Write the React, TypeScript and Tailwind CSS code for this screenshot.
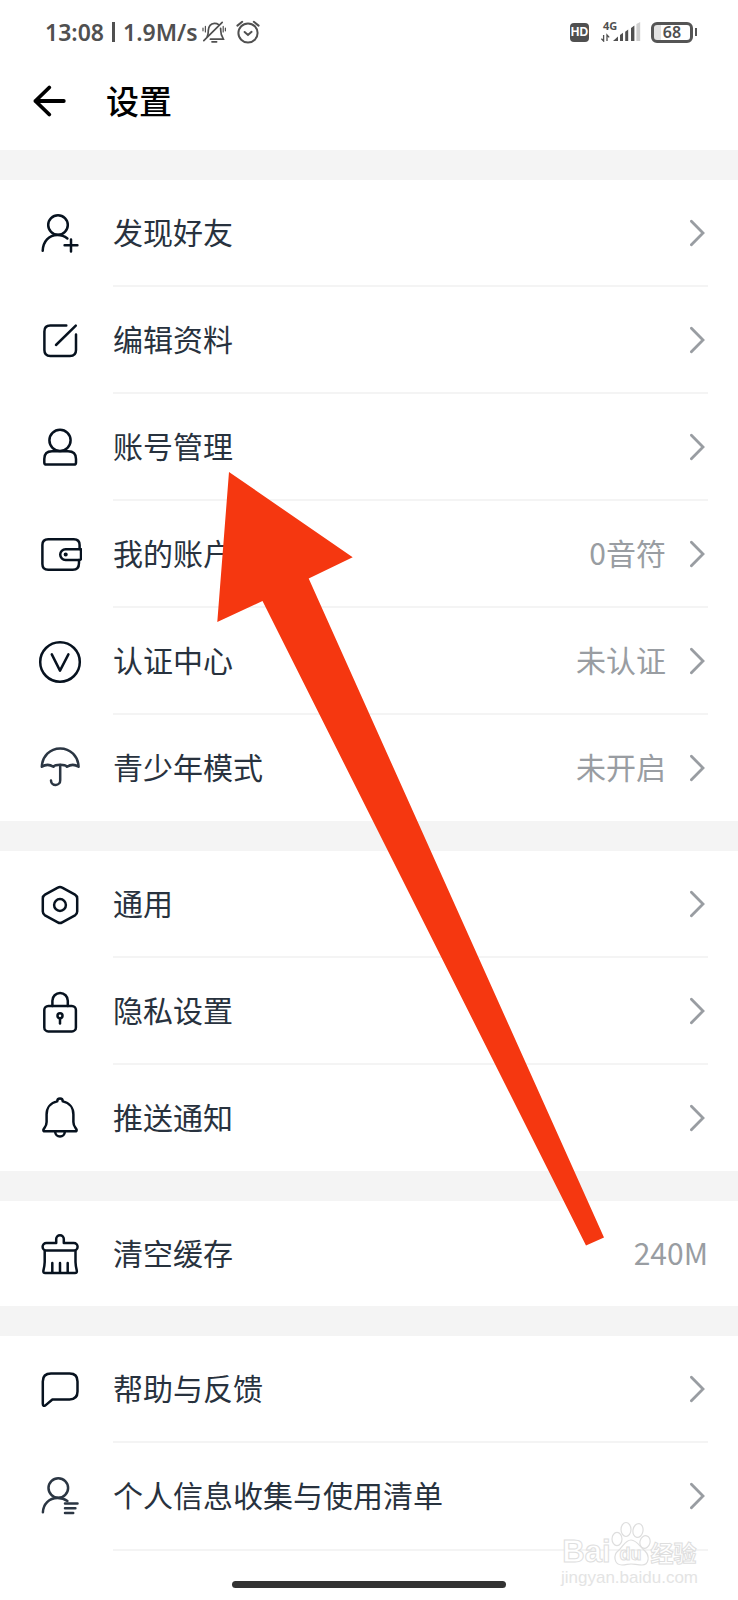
import type { ReactNode } from "react";

type Item = {
  label: string;
  icon: ReactNode;
  value?: string;
  soft?: boolean;
  chevron?: boolean;
};

const sections: Item[][] = [
  [
    {
      label: "发现好友",
      icon: (
        <>
          <circle cx="20" cy="13" r="9.8" />
          <path d="M4.7 38.8C5 29.5 11 23 19.4 23C23.4 23 26.6 24.2 29.4 26.4" />
          <path d="M26.6 33.3H39.4M33 27.4V39.6" />
        </>
      ),
    },
    {
      label: "编辑资料",
      icon: (
        <>
          <path d="M28.3 6.5H12.3Q6.4 6.5 6.4 12.4V31Q6.4 37 12.3 37H32Q38 37 38 31V15.6" />
          <path d="M18 26L37.8 6.7" />
        </>
      ),
    },
    {
      label: "账号管理",
      icon: (
        <>
          <circle cx="22" cy="14.3" r="10.6" />
          <path d="M14 25.3H30Q38 25.3 38 33V36.4Q38 38.5 36 38.5H8.4Q6.3 38.5 6.3 36.4V33Q6.3 25.3 14 25.3Z" />
        </>
      ),
    },
    {
      label: "我的账户",
      value: "0音符",
      icon: (
        <>
          <path d="M41.6 16V12Q41.6 6.2 35.8 6.2H10.2Q4.4 6.2 4.4 12V31Q4.4 36.8 10.2 36.8H34.8Q41 36.8 41 30V27" />
          <path d="M41 16.2H27.6A5.4 5.4 0 0 0 27.6 27H41.4Q43 27 43 25.4V16.2H41" />
          <circle cx="27.7" cy="21.5" r="0.8" fill="currentColor" />
        </>
      ),
    },
    {
      label: "认证中心",
      value: "未认证",
      icon: (
        <>
          <circle cx="22" cy="22" r="19.8" />
          <path d="M13.8 14.4L22 30.6L30.4 14.4" />
        </>
      ),
    },
    {
      label: "青少年模式",
      value: "未开启",
      soft: true,
      icon: (
        <>
          <path d="M3.8 20.8C4.2 10.5 12 2.4 22.2 2.4S40.2 10.5 40.6 20.8C37 18.4 32.6 18.4 29 20.8C26.6 18.2 17.8 18.2 15.4 20.8C11.8 18.4 7.4 18.4 3.8 20.8Z" />
          <path d="M22.2 19V34.2A4.6 4.6 0 0 1 13 34.6" />
        </>
      ),
    },
  ],
  [
    {
      label: "通用",
      icon: (
        <>
          <path d="M19.8 4.7Q22 3.4 24.2 4.7L37 11.6Q39.2 12.9 39.2 15.4V28.6Q39.2 31.1 37 32.4L24.2 39.3Q22 40.6 19.8 39.3L7 32.4Q4.8 31.1 4.8 28.6V15.4Q4.8 12.9 7 11.6Z" />
          <circle cx="22" cy="22" r="5.9" />
        </>
      ),
    },
    {
      label: "隐私设置",
      icon: (
        <>
          <rect x="6.3" y="16" width="31.6" height="25.4" rx="4" />
          <path d="M14.4 16V10.7A7.7 7.7 0 0 1 29.8 10.7V16" />
          <circle cx="22" cy="25.7" r="2.5" />
          <path d="M22 28.2V33.4" />
        </>
      ),
    },
    {
      label: "推送通知",
      icon: (
        <>
          <path d="M19.2 5.4C19.2 1.4 24.8 1.4 24.8 5.4C31.4 6.8 35.4 12 35.4 18.6V26C35.4 30.5 37.8 31.6 38.6 33.8Q38.8 35.3 37.4 35.3H6.6Q5.2 35.3 5.4 33.8C6.2 31.6 8.6 30.5 8.6 26V18.6C8.6 12 12.6 6.8 19.2 5.4Z" />
          <path d="M17.2 35.8A4.8 4.8 0 0 0 26.8 35.8" />
        </>
      ),
    },
  ],
  [
    {
      label: "清空缓存",
      value: "240M",
      chevron: false,
      icon: (
        <>
          <path d="M18.2 10.9V7A3.8 3.8 0 0 1 25.8 7V10.9H35.8A3.8 3.8 0 0 1 35.8 18.5H8.4A3.8 3.8 0 0 1 8.4 10.9Z" />
          <path d="M6.7 18.5V30Q6.6 34 5.4 38.6Q5 41 7.2 41H37Q39.2 41 38.8 38.6Q37.6 34 37.5 30V18.5" />
          <path d="M14.3 31V40M22 31V40M29.7 31V40" />
        </>
      ),
    },
  ],
  [
    {
      label: "帮助与反馈",
      icon: (
        <path d="M13 5.6H31.6Q39.5 5.6 39.5 13.4V23.6Q39.5 31.5 31.6 31.5H14.4L7.4 37.4Q4.8 38.8 4.8 35.8V13.4Q4.8 5.6 13 5.6Z" />
      ),
    },
    {
      label: "个人信息收集与使用清单",
      soft: true,
      icon: (
        <>
          <circle cx="20.3" cy="14" r="9.8" />
          <path d="M4.9 38.3C5.2 30 11 24 19.6 24C23.4 24 26.6 25 29.4 27" />
          <path d="M27 29.6H39.5M27 34.3H37.4M27 39H35.2" />
        </>
      ),
    },
  ],
];

function StatusBar() {
  return (
    <div className="flex h-16 items-center justify-between pr-[41px] pl-[45px] text-[#505050]">
      <div className="flex items-center">
        <span className="flex items-center gap-2 font-['Noto_Sans','Noto_Sans_CJK_SC',sans-serif] text-[23px] leading-8 font-semibold">
          <span>13:08</span>
          <span className="h-5 w-[3px] bg-current" />
          <span>1.9M/s</span>
        </span>
        <svg
          className="ml-1 h-6 w-6"
          viewBox="0 0 24 24"
          fill="none"
          stroke="currentColor"
          strokeWidth="1.7"
          strokeLinecap="round"
          aria-label="静音"
        >
          <path d="M5.2 16.4C6.4 14.8 6.2 12.6 6.3 10.4C6.6 6 9 3.6 12.4 3.3Q14.8 3.2 16.6 4.6M18.6 8.4C19 11.6 18.6 14.4 20.2 16.4L21.4 19.2H8.4" />
          <path d="M20.2 2.4L1.8 20.6" />
          <path d="M10 21.8H14.6" />
          <path d="M3.4 6.4V12M1 8V10.8M21.2 6.4V12M23.4 8V10.8" strokeWidth="1.2" />
        </svg>
        <svg
          className="ml-2.5 h-6 w-6"
          viewBox="0 0 24 24"
          fill="none"
          stroke="currentColor"
          strokeWidth="2"
          strokeLinecap="round"
          aria-label="闹钟"
        >
          <circle cx="12" cy="13" r="9.6" />
          <path d="M8.6 12L12 15L15.6 11.8" />
          <path d="M1.4 5.6L6.2 1.8M22.6 5.6L17.8 1.8" />
        </svg>
      </div>
      <div className="flex items-center">
        <span className="flex h-[19px] w-[19px] items-center justify-center rounded-sm bg-[#505050] font-['Liberation_Sans',sans-serif] text-xs leading-none font-bold text-white">
          HD
        </span>
        <div className="ml-3 flex h-6 flex-col">
          <span className="pl-0.5 font-['Noto_Sans',sans-serif] text-[11px] leading-3 font-bold">4G</span>
          <svg className="-mt-2.5 h-5 w-10" viewBox="0 0 40 20" fill="currentColor" aria-hidden="true">
            <path d="M2.6 13V19L.4 16.6M6 19V13L8.2 15.4" fill="none" stroke="currentColor" strokeWidth="1.3" />
            <path d="M12 19L17 14.6V19Z" />
            <path d="M19 13L22 10.8V19H19Z" />
            <path d="M24.2 9.8L27.2 7.6V19H24.2Z" />
            <path d="M30 6L33.4 3.4V19H30Z" />
            <path d="M35.4 2L39.2 0V19H35.4Z" fill="#cfcfcf" />
          </svg>
        </div>
        <div className="ml-2.5 flex items-center gap-0.5">
          <span className="flex h-[21px] w-[42px] items-center justify-center rounded-md border-[3px] border-[#555] bg-linear-to-r from-[#e2e2e2] from-20% to-white to-20% font-['Noto_Sans',sans-serif] text-base leading-none font-semibold">
            68
          </span>
          <span className="h-2 w-0.5 bg-[#555]" />
        </div>
      </div>
    </div>
  );
}

function Row({ item }: { item: Item }) {
  return (
    <li className="group flex min-h-[107px] last:min-h-[106px] only:min-h-[105px]">
      <a href="#" className="flex flex-1 items-stretch pr-[30px] pl-[38px]">
        <svg
          className={`h-11 w-11 shrink-0 self-center ${item.soft ? "text-[#2b3643]" : "text-[#07121f]"}`}
          viewBox="0 0 44 44"
          fill="none"
          stroke="currentColor"
          strokeWidth="2.5"
          strokeLinecap="round"
          strokeLinejoin="round"
          aria-hidden="true"
        >
          {item.icon}
        </svg>
        <span className="ml-[31px] flex flex-1 items-center border-b-2 border-[#f4f4f4] text-[30px] leading-10 group-last:border-b-0">
          <span className="flex-1 pb-1 text-[#28323e]">{item.label}</span>
          {item.value && <span className="pb-1 text-[#999da2]">{item.value}</span>}
          {item.chevron !== false && (
            <svg
              className="ml-6 h-[30px] w-[18px] text-[#999da2]"
              viewBox="0 0 18 30"
              fill="none"
              stroke="currentColor"
              strokeWidth="2.8"
              strokeLinecap="round"
              aria-hidden="true"
            >
              <path d="M1.4 3.2L13 15L1.4 26.8" />
            </svg>
          )}
        </span>
      </a>
    </li>
  );
}

function Watermark() {
  return (
    <div className="pointer-events-none absolute right-10 bottom-3 flex flex-col items-center">
      <div className="flex items-end text-white [-webkit-text-stroke:1px_#dedede]">
        <span className="font-['Liberation_Sans',sans-serif] text-[31px] leading-8 font-bold">Bai</span>
        <div className="relative flex h-12 w-10 items-end justify-center">
          <svg
            className="absolute inset-0 h-12 w-10"
            viewBox="0 0 40 48"
            fill="none"
            stroke="#dedede"
            strokeWidth="1.2"
            aria-hidden="true"
          >
            <ellipse cx="6" cy="19" rx="5" ry="6.6" />
            <ellipse cx="15" cy="9.5" rx="5" ry="7" />
            <ellipse cx="27" cy="10.5" rx="5" ry="7" transform="rotate(10 27 10.5)" />
            <ellipse cx="34" cy="22" rx="5" ry="6.4" transform="rotate(15 34 22)" />
            <path d="M20 20C14 20 12 27 7 31C2 35 3 45 11 45C15 45 17 44 20 44S27 45 31 45C38 45 39 36 34 31C29 27 26 20 20 20Z" />
          </svg>
          <span className="relative font-['Liberation_Sans',sans-serif] text-lg leading-7 font-bold">du</span>
        </div>
        <span className="text-[23px] leading-8 font-bold">经验</span>
      </div>
      <span className="font-['Liberation_Sans',sans-serif] text-[17px] leading-5 text-[#e4e4e4]">
        jingyan.baidu.com
      </span>
    </div>
  );
}

export default function App() {
  return (
    <div className="relative overflow-hidden bg-white font-['Noto_Sans_CJK_SC',sans-serif]">
      <StatusBar />
      <header className="flex h-[86px] items-start pl-8">
        <button type="button" aria-label="返回" className="mt-[19px] h-9 w-9 text-black">
          <svg
            className="h-9 w-9"
            viewBox="0 0 36 36"
            fill="none"
            stroke="currentColor"
            strokeWidth="3.8"
            strokeLinecap="round"
            strokeLinejoin="round"
          >
            <path d="M17.3 4.5L3.4 18L17.3 31.5M3.4 18H31.8" />
          </svg>
        </button>
        <h1 className="mt-3.5 ml-[38px] text-[33px] leading-[44px] font-medium text-black">设置</h1>
      </header>
      <main>
        {sections.map((items, i) => (
          <section key={i} className="border-t-[30px] border-[#f4f4f4]">
            <ul>
              {items.map((item) => (
                <Row key={item.label} item={item} />
              ))}
            </ul>
          </section>
        ))}
      </main>
      <footer className="ml-[113px] mr-[30px] border-t-2 border-[#f4f4f4]" />
      <div className="flex justify-center pt-[30px] pb-3">
        <span className="h-[7px] w-[37%] rounded-full bg-[#333]" />
      </div>
      <Watermark />
      <svg
        className="pointer-events-none absolute top-[472px] left-[217px] h-[774px] w-[388px]"
        viewBox="217 472 388 774"
        fill="#f53710"
        aria-hidden="true"
      >
        <path d="M229 472L352.7 557.3L308.7 578.6L604 1237.5L586 1245.5L262.5 601L217.3 622Z" />
      </svg>
    </div>
  );
}
